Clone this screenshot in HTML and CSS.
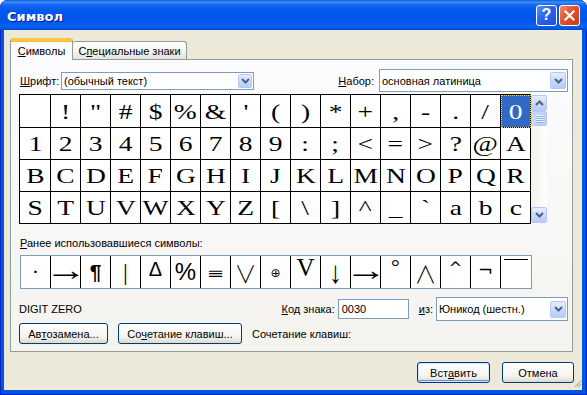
FILE: index.html
```html
<!DOCTYPE html>
<html>
	<head>
		<meta charset="utf-8">
		<title>Символ</title>
		<link rel="stylesheet" href="styles.css">
	</head>

	<body>
		<div class="window">
			<!--Title bar with help and close buttons-->
			<div class="titlebar">
				<span class="title">Символ</span>
				<span class="cbtn help">?</span>
				<span class="cbtn close">
					<svg width="13" height="13" viewBox="0 0 13 13"><path d="M2.5 2.5 L10.5 10.5 M10.5 2.5 L2.5 10.5" stroke="#fff" stroke-width="2.2" stroke-linecap="square"/></svg>
				</span>
			</div>

			<div class="client">
				<div class="tabs">
					<div class="tab active"><u>С</u>имволы</div>
					<div class="tab">С<u>п</u>ециальные знаки</div>
				</div>

				<div class="panel">
					<!--Font and subset pickers-->
					<div class="top-row">
						<span class="lbl font-lbl"><u>Ш</u>рифт:</span>
						<div class="combo font-combo">
							<span class="combo-text">(обычный текст)</span>
							<span class="drop"><svg width="9" height="6" viewBox="0 0 9 6"><path d="M1 1 L4.5 4.5 L8 1" fill="none" stroke="#4D6185" stroke-width="2"/></svg></span>
						</div>
						<span class="lbl set-lbl"><u>Н</u>абор:</span>
						<div class="combo set-combo">
							<span class="combo-text">основная латиница</span>
							<span class="drop"><svg width="9" height="6" viewBox="0 0 9 6"><path d="M1 1 L4.5 4.5 L8 1" fill="none" stroke="#4D6185" stroke-width="2"/></svg></span>
						</div>
					</div>

					<!--Character chart-->
					<div class="chart">
						<div class="grid">
							<div class="cell"><span>&nbsp;</span></div>
							<div class="cell"><span>!</span></div>
							<div class="cell"><span>"</span></div>
							<div class="cell"><span>#</span></div>
							<div class="cell"><span>$</span></div>
							<div class="cell"><span>%</span></div>
							<div class="cell"><span>&amp;</span></div>
							<div class="cell"><span>'</span></div>
							<div class="cell"><span>(</span></div>
							<div class="cell"><span>)</span></div>
							<div class="cell"><span>*</span></div>
							<div class="cell"><span>+</span></div>
							<div class="cell"><span>,</span></div>
							<div class="cell"><span>-</span></div>
							<div class="cell"><span>.</span></div>
							<div class="cell"><span>/</span></div>
							<div class="cell selected"><span>0</span></div>

							<div class="cell"><span>1</span></div>
							<div class="cell"><span>2</span></div>
							<div class="cell"><span>3</span></div>
							<div class="cell"><span>4</span></div>
							<div class="cell"><span>5</span></div>
							<div class="cell"><span>6</span></div>
							<div class="cell"><span>7</span></div>
							<div class="cell"><span>8</span></div>
							<div class="cell"><span>9</span></div>
							<div class="cell"><span>:</span></div>
							<div class="cell"><span>;</span></div>
							<div class="cell"><span>&lt;</span></div>
							<div class="cell"><span>=</span></div>
							<div class="cell"><span>&gt;</span></div>
							<div class="cell"><span>?</span></div>
							<div class="cell"><span>@</span></div>
							<div class="cell"><span>A</span></div>

							<div class="cell"><span>B</span></div>
							<div class="cell"><span>C</span></div>
							<div class="cell"><span>D</span></div>
							<div class="cell"><span>E</span></div>
							<div class="cell"><span>F</span></div>
							<div class="cell"><span>G</span></div>
							<div class="cell"><span>H</span></div>
							<div class="cell"><span>I</span></div>
							<div class="cell"><span>J</span></div>
							<div class="cell"><span>K</span></div>
							<div class="cell"><span>L</span></div>
							<div class="cell"><span>M</span></div>
							<div class="cell"><span>N</span></div>
							<div class="cell"><span>O</span></div>
							<div class="cell"><span>P</span></div>
							<div class="cell"><span>Q</span></div>
							<div class="cell"><span>R</span></div>

							<div class="cell"><span>S</span></div>
							<div class="cell"><span>T</span></div>
							<div class="cell"><span>U</span></div>
							<div class="cell"><span>V</span></div>
							<div class="cell"><span>W</span></div>
							<div class="cell"><span>X</span></div>
							<div class="cell"><span>Y</span></div>
							<div class="cell"><span>Z</span></div>
							<div class="cell"><span>[</span></div>
							<div class="cell"><span>\</span></div>
							<div class="cell"><span>]</span></div>
							<div class="cell"><span>^</span></div>
							<div class="cell"><span>_</span></div>
							<div class="cell"><span>`</span></div>
							<div class="cell"><span>a</span></div>
							<div class="cell"><span>b</span></div>
							<div class="cell"><span>c</span></div>
						</div>

						<div class="vscroll">
							<span class="sbtn"><svg width="9" height="6" viewBox="0 0 9 6"><path d="M1 5 L4.5 1.5 L8 5" fill="none" stroke="#4D6185" stroke-width="2"/></svg></span>
							<span class="thumb"></span>
							<span class="track"></span>
							<span class="sbtn"><svg width="9" height="6" viewBox="0 0 9 6"><path d="M1 1 L4.5 4.5 L8 1" fill="none" stroke="#4D6185" stroke-width="2"/></svg></span>
						</div>
					</div>

					<!--Recently used symbols-->
					<div class="lbl recent-lbl"><u>Р</u>анее использовавшиеся символы:</div>
					<div class="recent">
						<div class="rc r-dot">·</div>
						<div class="rc r-arrow"><span>→</span></div>
						<div class="rc r-pil">¶</div>
						<div class="rc r-bar">|</div>
						<div class="rc r-sans">Δ</div>
						<div class="rc r-pct">%</div>
						<div class="rc r-eq"><span>≡</span></div>
						<div class="rc r-dv"><span>∨</span></div>
						<div class="rc r-small">⊕</div>
						<div class="rc r-v">V</div>
						<div class="rc r-down"><span>↓</span></div>
						<div class="rc r-arrow"><span>→</span></div>
						<div class="rc r-deg">°</div>
						<div class="rc r-dv"><span>∧</span></div>
						<div class="rc r-caret">^</div>
						<div class="rc r-not">¬</div>
						<div class="rc r-over"></div>
					</div>

					<!--Character name and code-->
					<div class="info-row">
						<span class="char-name">DIGIT ZERO</span>
						<span class="lbl"><u>К</u>од знака:</span>
						<div class="edit">0030</div>
						<span class="lbl from-lbl"><u>и</u>з:</span>
						<div class="combo code-combo">
							<span class="combo-text">Юникод (шестн.)</span>
							<span class="drop"><svg width="9" height="6" viewBox="0 0 9 6"><path d="M1 1 L4.5 4.5 L8 1" fill="none" stroke="#4D6185" stroke-width="2"/></svg></span>
						</div>
					</div>

					<div class="btn-row">
						<span class="btn auto-btn">Ав<u>т</u>озамена...</span>
						<span class="btn keys-btn">Со<u>ч</u>етание клавиш...</span>
						<span class="lbl">Сочетание клавиш:</span>
					</div>
				</div>

				<div class="footer">
					<span class="btn default-btn">Вст<u>а</u>вить</span>
					<span class="btn cancel-btn">Отмена</span>
					<svg class="grip" width="8" height="8" viewBox="0 0 8 8"><path d="M7 1 L1 7 M7 4 L4 7 M7 7 L7 7" stroke="#B8B4A2" stroke-width="1.2"/></svg>
				</div>
			</div>
		</div>
	</body>
</html>
```

FILE: styles.css
```css
* {
	box-sizing: border-box;
}

body {
	margin: 0;
	background: #fff;
	font: 11px "Liberation Sans", Arial, sans-serif;
	color: #000;
}

u {
	text-decoration: underline;
	text-underline-offset: 1px;
}

/* window frame */
.window {
	width: 587px;
	height: 395px;
	display: flex;
	flex-direction: column;
	background: #0553E2;
	border-radius: 8px 8px 0 0;
	overflow: hidden;
	box-shadow: inset 1px 0 #0024B8, inset -1px 0 #0024B8, inset 0 -1px #0024B8;
}

.titlebar {
	height: 30px;
	flex: none;
	display: flex;
	align-items: center;
	gap: 2px;
	padding: 0 7px 0 7px;
	background: linear-gradient(#0A5CE0 0%, #3E8EF7 7%, #1468F0 16%, #0058EE 35%, #0055E8 70%, #0863F4 88%, #0049D2 100%);
}

.title {
	flex: 1;
	padding-top: 3px;
	color: #fff;
	font: bold 13px "DejaVu Sans", sans-serif;
	text-shadow: 1px 1px #0A1A8C;
}

.cbtn {
	width: 21px;
	height: 21px;
	display: flex;
	align-items: center;
	justify-content: center;
	border: 1px solid #fff;
	border-radius: 3px;
	color: #fff;
}

.help {
	background: linear-gradient(135deg, #5B8FF9 0%, #2C63EA 45%, #1B4FD6 100%);
	font: bold 16px "Liberation Sans", sans-serif;
}

.close {
	background: linear-gradient(135deg, #F08A64 0%, #E2532C 45%, #C53A18 100%);
}

.client {
	flex: 1;
	margin: 0 5px 5px 4px;
	padding: 8px 0 0 6px;
	background: #ECE9D8;
}

/* tabs */
.tabs {
	display: flex;
	align-items: flex-end;
	height: 21px;
}

.tab {
	height: 18px;
	padding-top: 3px;
	line-height: 13px;
	text-align: center;
	border: 1px solid #919B9C;
	border-bottom: none;
	border-radius: 3px 3px 0 0;
	background: linear-gradient(#FFFFFF, #F3F3EF 60%, #E3E2DA);
}

.tab.active {
	position: relative;
	z-index: 1;
	width: 63px;
	height: 22px;
	margin-bottom: -1px;
	padding-top: 4px;
	border-top: 3px solid #FFC83C;
	box-shadow: inset 0 1px #F7B73E;
	background: #FCFCFE;
}

.tab + .tab {
	width: 114px;
	border-left: none;
}

.panel {
	width: 563px;
	height: 293px;
	padding: 0 4px 0 8px;
	border: 1px solid #919B9C;
	background: linear-gradient(#FCFCFE, #F4F3EE);
}

.lbl {
	white-space: nowrap;
}

/* combos and edits */
.top-row {
	display: flex;
	align-items: center;
	height: 23px;
	margin-top: 9px;
}

.font-lbl {
	width: 42px;
	padding-left: 1px;
}

.set-lbl {
	margin-left: auto;
	margin-right: 5px;
}

.combo {
	display: flex;
	align-items: center;
	border: 1px solid #7F9DB9;
	background: #fff;
}

.combo-text {
	flex: 1;
	padding-left: 2px;
}

.drop,
.sbtn {
	display: flex;
	align-items: center;
	justify-content: center;
	border: 1px solid #B4C8F6;
	border-radius: 2px;
	background: linear-gradient(#E6EEFE, #C8D8FC 55%, #B6CBF8);
}

.font-combo {
	width: 193px;
	height: 18px;
}

.font-combo .drop {
	width: 14px;
	height: 14px;
	margin-right: 1px;
}

.set-combo {
	width: 189px;
	height: 23px;
}

.set-combo .drop,
.code-combo .drop {
	width: 16px;
	height: 17px;
	margin-right: 1px;
}

/* character chart */
.chart {
	display: flex;
	align-items: flex-start;
	margin-top: 2px;
}

.grid {
	display: grid;
	grid-template-columns: 31px repeat(16, 30px);
	grid-template-rows: 33px repeat(3, 32px);
	border-left: 1px solid #000;
	border-top: 1px solid #000;
	background: #fff;
}

.cell {
	border-right: 1px solid #000;
	border-bottom: 1px solid #000;
	display: flex;
	align-items: center;
	justify-content: center;
	padding-top: 1px;
	font: 22px "Liberation Serif", "Times New Roman", serif;
}

.cell span {
	display: inline-block;
	transform: scaleX(1.25);
}

.cell.selected {
	background: #316AC5;
	color: #fff;
	outline: 1px dotted #E8D868;
	outline-offset: -1px;
}

.vscroll {
	width: 16px;
	height: 128px;
	margin-top: 1px;
	display: flex;
	flex-direction: column;
	background: linear-gradient(90deg, #F3F1EC, #FEFEFB);
}

.sbtn {
	height: 16px;
	flex: none;
}

.thumb {
	height: 15px;
	flex: none;
	display: flex;
	align-items: center;
	justify-content: center;
	border: 1px solid #B4C8F6;
	border-radius: 2px;
	background: linear-gradient(90deg, #CADAFC, #BBCEF8);
}

.thumb::after {
	content: "";
	width: 7px;
	height: 8px;
	background: repeating-linear-gradient(#EEF4FE 0 1px, #8CACEB 1px 2px);
}

.track {
	flex: 1;
}

/* recently used */
.recent-lbl {
	margin-top: 13px;
	padding-left: 1px;
	line-height: 13px;
}

.recent {
	display: flex;
	width: 512px;
	height: 34px;
	margin-top: 5px;
	margin-left: 1px;
	border: 1px solid #7F9DB9;
	background: #fff;
}

.rc {
	width: 30px;
	border-right: 1px solid #000;
	display: flex;
	align-items: center;
	justify-content: center;
	font: 22px "Liberation Serif", serif;
}

.rc:last-child {
	border-right: none;
}

.rc span {
	display: inline-block;
}

.r-arrow {
	font: 30px "Liberation Serif", serif;
	padding-bottom: 4px;
}

.r-arrow span {
	transform: scaleX(1.4);
}

.r-down {
	font: 26px "Liberation Serif", serif;
	padding-top: 1px;
}

.r-down span {
	transform: scaleY(1.2);
}

.r-pil {
	font: bold 21px "Liberation Sans", sans-serif;
}

.r-bar {
	font: 24px "Liberation Serif", serif;
}

.r-sans {
	font: 20px "Liberation Sans", sans-serif;
	padding-bottom: 6px;
}

.r-pct {
	font: 24px "Liberation Sans", sans-serif;
}

.r-eq {
	font: 14px "DejaVu Sans", sans-serif;
	padding-top: 2px;
}

.r-eq span {
	transform: scale(1.5, 1);
}

.r-dv {
	font: 300 22px "Noto Sans CJK JP", "DejaVu Sans", sans-serif;
}

.r-dv span {
	transform: scale(1, 1.1);
}

.r-small {
	font: 12px "DejaVu Sans", sans-serif;
	padding-top: 2px;
}

.r-v {
	font: 25px "Liberation Serif", serif;
	padding-bottom: 8px;
}

.r-deg {
	padding-bottom: 10px;
}

.r-caret {
	font: 16px "DejaVu Sans", sans-serif;
	padding-bottom: 10px;
}

.r-not {
	font: 18px "DejaVu Sans", sans-serif;
	padding-bottom: 6px;
}

.r-over {
	align-items: flex-start;
}

.r-over::before {
	content: "";
	width: 24px;
	margin-top: 3px;
	border-top: 1px solid #000;
}

/* code row */
.info-row {
	display: flex;
	align-items: center;
	height: 24px;
	margin-top: 8px;
}

.char-name {
	flex: 1;
}

.edit {
	width: 71px;
	height: 20px;
	margin-left: 3px;
	padding: 3px 0 0 3px;
	border: 1px solid #7F9DB9;
	background: #fff;
}

.from-lbl {
	margin: 0 3px 0 10px;
}

.code-combo {
	width: 132px;
	height: 24px;
}

/* push buttons */
.btn-row {
	display: flex;
	align-items: center;
	gap: 10px;
	height: 21px;
	margin-top: 2px;
}

.btn {
	height: 21px;
	display: flex;
	align-items: center;
	justify-content: center;
	border: 1px solid #003C74;
	border-radius: 3px;
	background: linear-gradient(#FFFFFF, #F3F3EF 70%, #DCD8CC);
	white-space: nowrap;
}

.auto-btn {
	width: 89px;
}

.keys-btn {
	width: 124px;
}

.footer {
	display: flex;
	justify-content: flex-end;
	align-items: flex-start;
	margin-top: 10px;
}

.footer .btn + .btn {
	margin-left: 12px;
}

.grip {
	margin-top: 18px;
}

.default-btn {
	width: 73px;
	box-shadow: inset 0 0 0 1px #CEE7FF, inset 0 -1px 0 1px #6D8DE8;
}

.cancel-btn {
	width: 72px;
}
```
